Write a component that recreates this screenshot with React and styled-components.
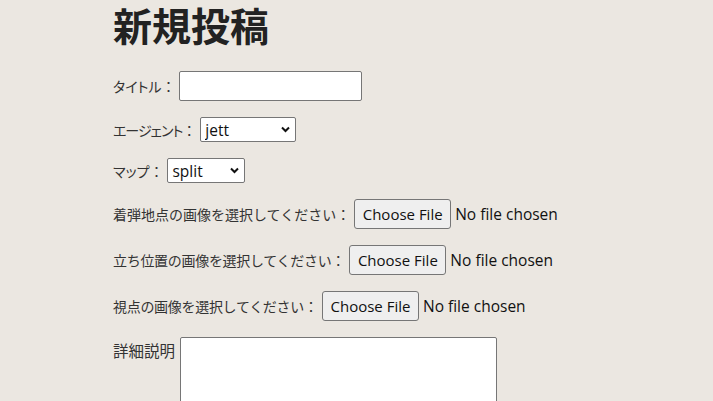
import React from "react";
import styled, { createGlobalStyle } from "styled-components";

const Global = createGlobalStyle`
  html, body { margin: 0; padding: 0; }
  body {
    background: #ebe7e1;
    color: #2b2b2b;
    font-family: "Noto Sans CJK JP", "Noto Sans", sans-serif;
  }
`;

const Page = styled.main`
  padding: 0 0 0 113px;
  display: flex;
  flex-direction: column;
`;

const Title = styled.h1`
  margin: 0;
  font-size: 39px;
  line-height: 48px;
  font-weight: 700;
  color: #222;
  letter-spacing: 0;
`;

const Form = styled.form`
  display: flex;
  flex-direction: column;
  gap: 16px;
  margin-top: 23px;
`;

const Row = styled.div`
  display: flex;
  align-items: ${(p) => (p.$top ? "flex-start" : "center")};
  gap: ${(p) => p.$gap ?? 4}px;
  font-size: 14px;
  color: #333;
`;

const Label = styled.label`
  font-size: ${(p) => p.$size ?? 14}px;
  line-height: 20px;
  white-space: nowrap;
  letter-spacing: ${(p) => p.$spacing ?? 0}px;
  font-feature-settings: ${(p) => (p.$palt ? '"palt"' : "normal")};
  padding-top: ${(p) => (p.$top ? "3px" : "0")};
`;

const Colon = styled.span`
  font-feature-settings: normal;
  letter-spacing: 0;
`;

const TextInput = styled.input`
  box-sizing: border-box;
  width: 183px;
  height: 30px;
  border: 1px solid #767676;
  border-radius: 2px;
  background: #fff;
  margin: 0;
`;

const SelectWrap = styled.div`
  position: relative;
  display: inline-flex;
`;

const Select = styled.select`
  appearance: none;
  box-sizing: border-box;
  width: ${(p) => p.$w}px;
  height: 25px;
  border: 1px solid #767676;
  border-radius: 2px;
  background: #fff;
  color: #111;
  font-family: "Open Sans", "Noto Sans", sans-serif;
  font-size: 15.5px;
  padding: 0 0 0 4px;
  margin: 0;
`;

const Chevron = styled.svg`
  position: absolute;
  right: 6px;
  top: 9px;
  width: 9px;
  height: 7px;
  pointer-events: none;
`;

const FileField = styled.div`
  display: flex;
  align-items: center;
  gap: 4px;
`;

const FileButton = styled.button`
  box-sizing: border-box;
  width: 97px;
  height: 30px;
  padding: 0;
  border: 1px solid #767676;
  border-radius: 3px;
  background: #efefef;
  color: #111;
  font-family: "Open Sans", "Noto Sans", sans-serif;
  font-size: 15px;
  margin: 0;
`;

const FileStatus = styled.span`
  font-family: "Open Sans", "Noto Sans", sans-serif;
  font-size: 15.5px;
  color: #111;
`;

const TextArea = styled.textarea`
  box-sizing: border-box;
  width: 317px;
  height: 110px;
  border: 1px solid #767676;
  border-radius: 2px;
  background: #fff;
  margin: 0;
  resize: none;
`;

function ChevronIcon() {
  return (
    <Chevron viewBox="0 0 9 7">
      <path d="M1 1.5 L4.5 5 L8 1.5" fill="none" stroke="#111" strokeWidth="2" />
    </Chevron>
  );
}

function SelectField({ value, options, width }) {
  return (
    <SelectWrap>
      <Select defaultValue={value} $w={width}>
        {options.map((o) => (
          <option key={o}>{o}</option>
        ))}
      </Select>
      <ChevronIcon />
    </SelectWrap>
  );
}

function FileRow({ label, spacing }) {
  return (
    <Row>
      <Label $spacing={spacing}>
        {label}
        <Colon>：</Colon>
      </Label>
      <FileField>
        <FileButton type="button">Choose File</FileButton>
        <FileStatus>No file chosen</FileStatus>
      </FileField>
    </Row>
  );
}

export default function App() {
  return (
    <>
      <Global />
      <Page>
        <Title>新規投稿</Title>
        <Form>
          <Row>
            <Label $palt>
              タイトル<Colon>：</Colon>
            </Label>
            <TextInput type="text" />
          </Row>
          <Row>
            <Label $palt $spacing={-1}>
              エージェント<Colon>：</Colon>
            </Label>
            <SelectField value="jett" options={["jett", "sova", "viper"]} width={96} />
          </Row>
          <Row>
            <Label $palt>
              マップ<Colon>：</Colon>
            </Label>
            <SelectField value="split" options={["split", "bind", "haven"]} width={78} />
          </Row>
          <FileRow label="着弾地点の画像を選択してください" />
          <FileRow label="立ち位置の画像を選択してください" spacing={-0.3} />
          <FileRow label="視点の画像を選択してください" spacing={-0.3} />
          <Row $top $gap={5}>
            <Label $top $size={15.5}>
              詳細説明
            </Label>
            <TextArea />
          </Row>
        </Form>
      </Page>
    </>
  );
}
